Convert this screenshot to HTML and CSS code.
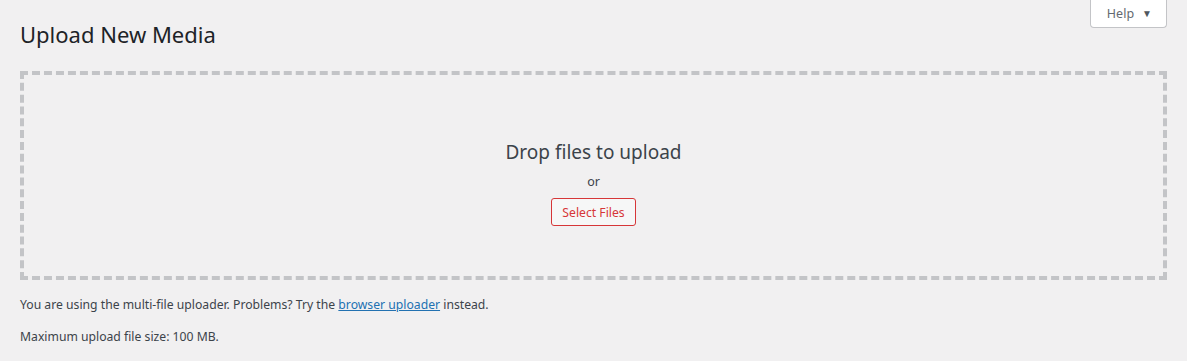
FILE: index.html
```html
<!DOCTYPE html>
<html lang="en">
<head>
<meta charset="utf-8">
<title>Upload New Media</title>
<link rel="stylesheet" href="styles.css">
</head>
<body>
<div class="screen-meta-links">
  <button class="help-btn" type="button">Help <span class="arrow">▼</span></button>
</div>
<div class="wrap">
  <h1 class="title">Upload New Media</h1>
  <div class="drag-drop-area">
    <div class="drag-drop-inside">
      <p class="drag-drop-info">Drop files to upload</p>
      <p class="or">or</p>
      <p class="buttons"><button class="select-btn" type="button">Select Files</button></p>
    </div>
  </div>
  <p class="note">You are using the multi-file uploader. Problems? Try the <a href="#" class="link">browser uploader</a> instead.</p>
  <p class="note">Maximum upload file size: 100 MB.</p>
</div>
</body>
</html>
```
FILE: styles.css
```css
html, body {
  margin: 0;
  padding: 0;
  background: #f1f0f1;
  color: #3c434a;
  font-family: "Noto Sans", "Open Sans", sans-serif;
  font-size: 12.2px;
  line-height: 1.4;
}
.screen-meta-links {
  display: flex;
  justify-content: flex-end;
  padding-right: 20px;
  height: 0;
}
.help-btn {
  height: 28px;
  padding: 0 14px 1px 16px;
  background: #fff;
  border: 1px solid #c3c4c7;
  border-top: none;
  border-radius: 0 0 4px 4px;
  color: #646970;
  font-family: inherit;
  font-size: 12.5px;
  display: flex;
  align-items: center;
  gap: 8px;
}
.help-btn .arrow {
  font-size: 10px;
  color: #50575e;
}
.wrap {
  padding: 10px 20px 0 20px;
}
.title {
  margin: 0;
  padding: 9px 0 4px;
  font-size: 22px;
  font-weight: 400;
  line-height: 30px;
  color: #1d2327;
}
.drag-drop-area {
  margin-top: 18px;
  height: 201px;
  border: 4px dashed #c3c4c7;
  display: flex;
  justify-content: center;
}
.drag-drop-inside {
  margin-top: 63px;
  text-align: center;
}
.drag-drop-info {
  margin: 0;
  font-size: 19px;
  line-height: 28px;
}
.or {
  margin: 7px 0 0;
  font-size: 12.5px;
  line-height: 18px;
}
.buttons {
  margin: 7px 0 0;
}
.select-btn {
  height: 28px;
  padding: 0 10px;
  background: #f6f7f7;
  border: 1px solid #d63638;
  border-radius: 3px;
  color: #d63638;
  font-family: inherit;
  font-size: 12.2px;
}
.note {
  margin: 15px 0 0;
  line-height: 19px;
}
.note + .note {
  margin-top: 13px;
}
.link {
  color: #2271b1;
  text-decoration: underline;
}
```
